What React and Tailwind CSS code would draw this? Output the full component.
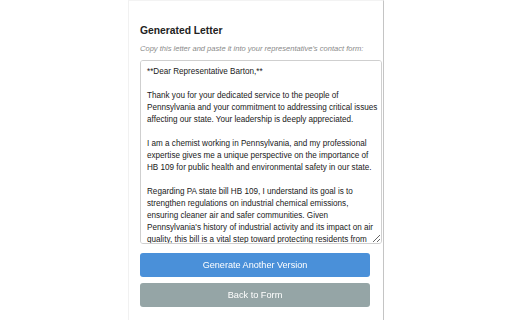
import React from "react";

const LETTER = `**Dear Representative Barton,**

Thank you for your dedicated service to the people of Pennsylvania and your commitment to addressing critical issues affecting our state. Your leadership is deeply appreciated.

I am a chemist working in Pennsylvania, and my professional expertise gives me a unique perspective on the importance of HB 109 for public health and environmental safety in our state.

Regarding PA state bill HB 109, I understand its goal is to strengthen regulations on industrial chemical emissions, ensuring cleaner air and safer communities. Given Pennsylvania's history of industrial activity and its impact on air quality, this bill is a vital step toward protecting residents from harmful pollutants and long-term health risks.

I respectfully urge you to support HB 109.

Sincerely,
A Concerned Constituent`;

export default function App() {
  return (
    <div className="w-[512px] h-[320px] bg-white overflow-hidden flex justify-start font-['Liberation_Sans',Arial,sans-serif]">
      <div className="ml-[128px] w-[256px] h-[320px] border-l border-l-[#f1f1f1] border-r border-r-[#c4c4c4] border-t border-t-[#f3f3f3] bg-white pl-[11px] pt-[23px] flex flex-col">
        <h2 className="text-[10.3px] leading-[14px] font-bold text-[#222]">Generated Letter</h2>
        <p className="mt-[5px] text-[7.55px] leading-[12px] italic text-[#8a8a8a]">
          Copy this letter and paste it into your representative's contact form:
        </p>
        <textarea
          readOnly
          defaultValue={LETTER}
          className="mt-[5px] w-[242px] h-[184px] border border-[#cfcfcf] rounded-[3px] pl-[6px] pr-[2px] py-[5px] text-[8.15px] leading-[12px] text-[#1a1a1a] bg-white outline-none [scrollbar-width:none] font-['Liberation_Sans',Arial,sans-serif]"
        />
        <button className="mt-[9px] w-[230px] h-[24px] rounded-[3px] bg-[#4a90d9] text-white text-[9.1px] leading-[24px]">
          Generate Another Version
        </button>
        <button className="mt-[6px] w-[230px] h-[24px] rounded-[3px] bg-[#95a5a6] text-white text-[9.2px] leading-[24px]">
          Back to Form
        </button>
      </div>
    </div>
  );
}
